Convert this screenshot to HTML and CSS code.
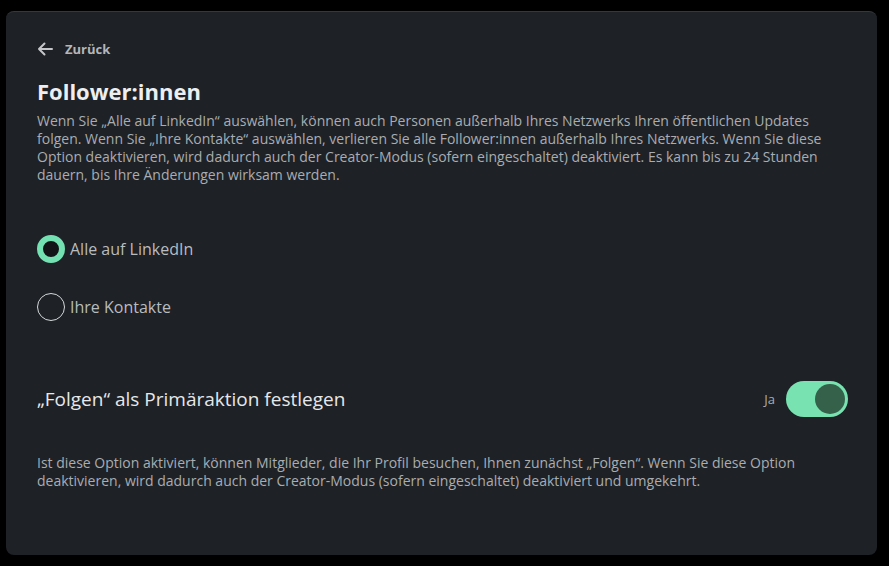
FILE: index.html
```html
<!DOCTYPE html>
<html lang="de">
<head>
  <meta charset="UTF-8">
  <meta name="viewport" content="width=device-width, initial-scale=1.0">
  <title>Follower:innen</title>
  <link rel="stylesheet" href="styles.css">
</head>
<body>
  <div class="panel">
    <a class="back" href="#">
      <svg width="16" height="14" viewBox="0 0 16 14" fill="none" stroke="currentColor" stroke-width="2" stroke-linecap="round" stroke-linejoin="round">
        <path d="M15 7H2M7.5 1.5L2 7l5.5 5.5"/>
      </svg>
      <span>Zurück</span>
    </a>

    <h1>Follower:innen</h1>
    <p class="desc">Wenn Sie „Alle auf LinkedIn“ auswählen, können auch Personen außerhalb Ihres Netzwerks Ihren öffentlichen Updates folgen. Wenn Sie „Ihre Kontakte“ auswählen, verlieren Sie alle Follower:innen außerhalb Ihres Netzwerks. Wenn Sie diese Option deaktivieren, wird dadurch auch der Creator-Modus (sofern eingeschaltet) deaktiviert. Es kann bis zu 24 Stunden dauern, bis Ihre Änderungen wirksam werden.</p>

    <div class="radio-group">
      <label class="radio">
        <input type="radio" name="followers" checked>
        <span>Alle auf LinkedIn</span>
      </label>
      <label class="radio">
        <input type="radio" name="followers">
        <span>Ihre Kontakte</span>
      </label>
    </div>

    <div class="setting">
      <span class="setting-title">„Folgen“ als Primäraktion festlegen</span>
      <label class="switch-wrap">
        <span class="switch-label">Ja</span>
        <input type="checkbox" class="switch" checked>
      </label>
    </div>

    <p class="desc note">Ist diese Option aktiviert, können Mitglieder, die Ihr Profil besuchen, Ihnen zunächst „Folgen“. Wenn Sie diese Option deaktivieren, wird dadurch auch der Creator-Modus (sofern eingeschaltet) deaktiviert und umgekehrt.</p>
  </div>
</body>
</html>
```

FILE: styles.css
```css
body {
  margin: 0;
  padding: 11px 12px 10px 6px;
  background-color: #000;
  font-family: "Open Sans", Lato, sans-serif;
  color: #a9adb1;
}

.panel {
  background: #1e2126;
  border-top: 1px solid #34373c;
  border-radius: 8px;
  height: 544px;
  box-sizing: border-box;
  padding: 27px 29px 0 31px;
}

.back {
  display: flex;
  align-items: center;
  gap: 12px;
  height: 20px;
  color: #b4b6b9;
  text-decoration: none;
  font-size: 13px;
  font-weight: bold;
}

.back svg {
  color: #c4c6c9;
}

h1 {
  margin: 18px 0 0;
  font-size: 22px;
  line-height: 28px;
  color: #eceef0;
}

.desc {
  margin: 7px 0 0;
  max-width: 790px;
  font-size: 14px;
  line-height: 18px;
}

.radio-group {
  display: flex;
  flex-direction: column;
  gap: 30px;
  margin-top: 51px;
}

.radio {
  display: flex;
  align-items: center;
  gap: 5px;
  height: 28px;
  font-size: 16px;
  color: #b9bcbf;
  cursor: pointer;
}

.radio input {
  appearance: none;
  -webkit-appearance: none;
  margin: 0;
  width: 28px;
  height: 28px;
  border-radius: 50%;
  border: 1.5px solid #d6d8da;
  box-sizing: border-box;
  background: transparent;
}

.radio input:checked {
  border: 6px solid #74e1b2;
  background: #121417;
}

.setting {
  display: flex;
  align-items: center;
  justify-content: space-between;
  height: 36px;
  margin-top: 60px;
}

.setting-title {
  font-size: 19px;
  color: #e6e8ea;
}

.switch-wrap {
  display: flex;
  align-items: center;
  gap: 11px;
}

.switch-label {
  font-size: 13px;
  color: #a9adb1;
}

.switch {
  appearance: none;
  -webkit-appearance: none;
  margin: 0;
  position: relative;
  width: 62px;
  height: 36px;
  border-radius: 18px;
  background: #78e2b0;
  cursor: pointer;
}

.switch::before {
  content: '';
  position: absolute;
  top: 3px;
  right: 3px;
  width: 30px;
  height: 30px;
  border-radius: 50%;
  background: #35614b;
}

.note {
  margin-top: 37px;
}
```
